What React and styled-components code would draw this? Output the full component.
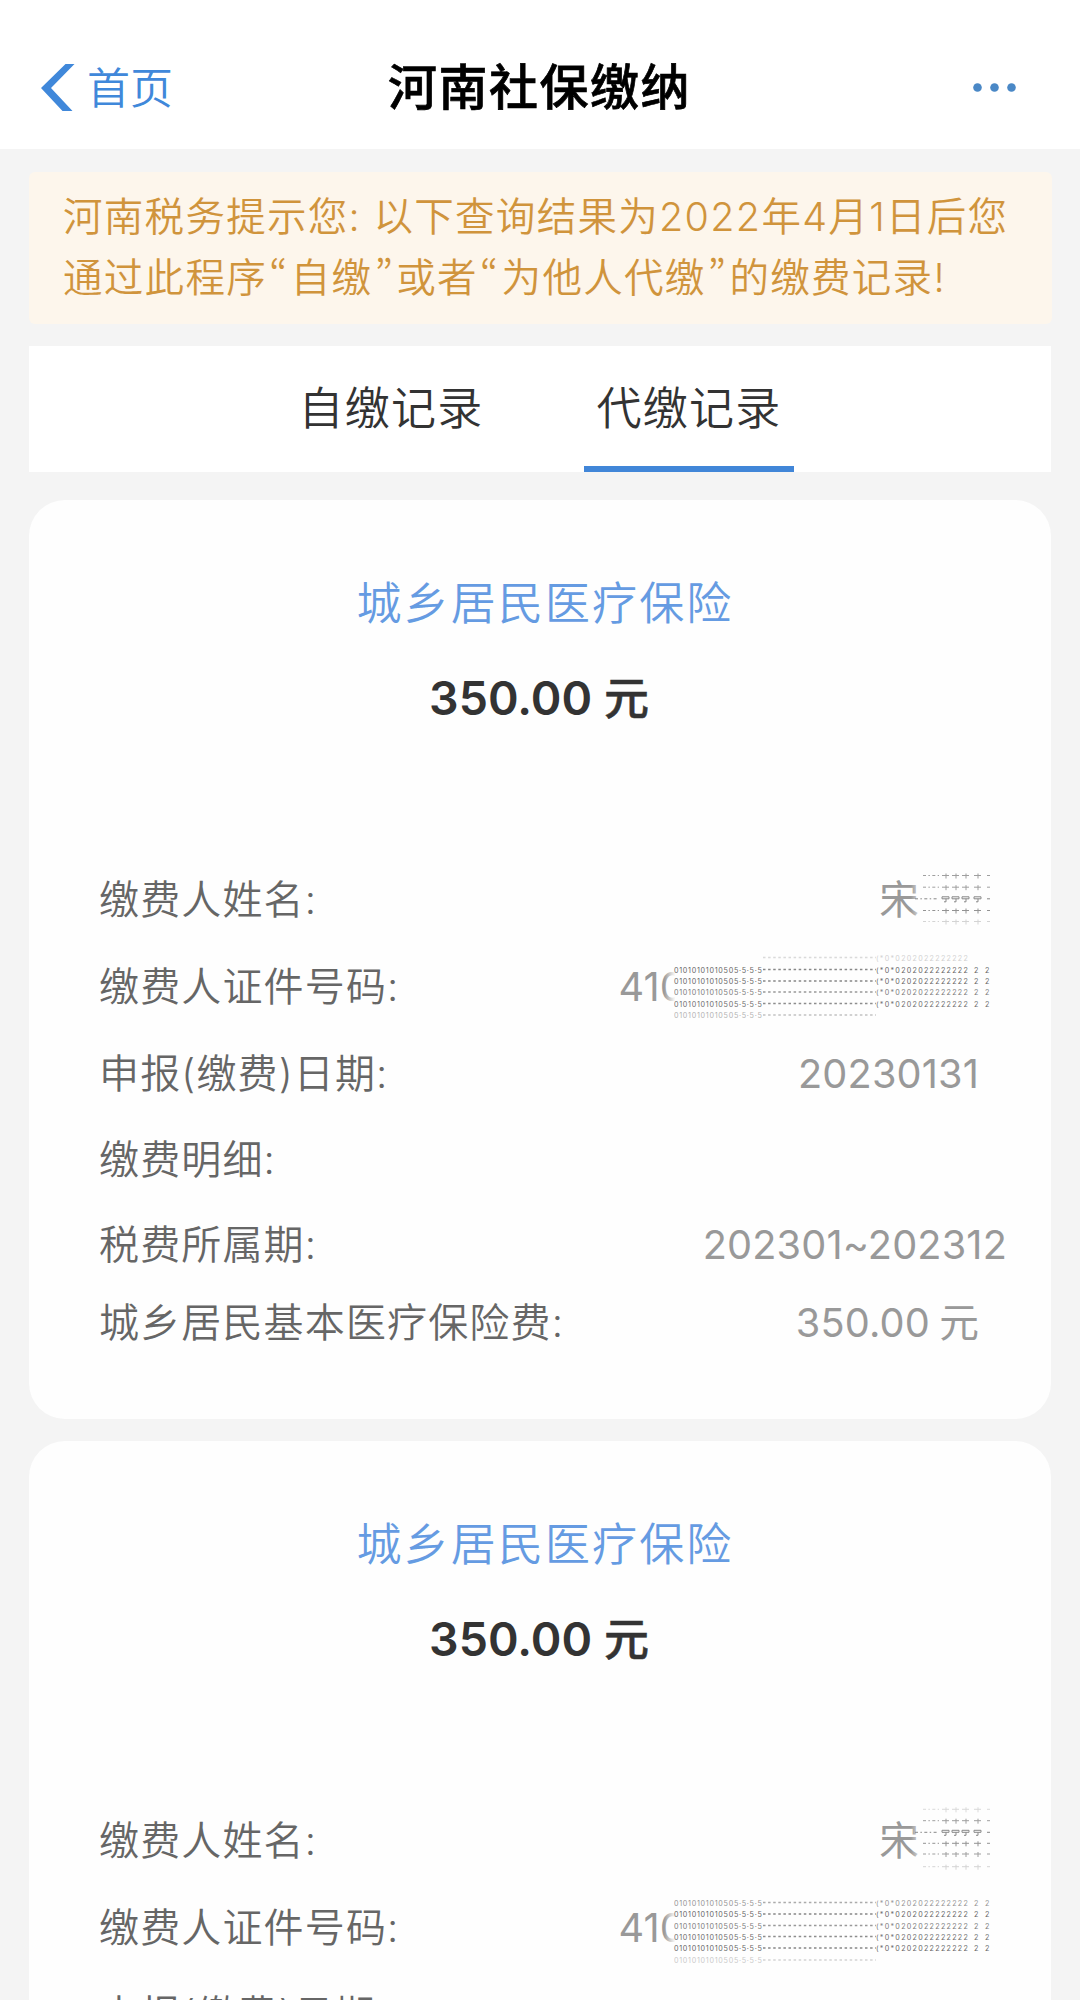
import React, { useState } from 'react'
import styled, { createGlobalStyle } from 'styled-components'

const GlobalStyle = createGlobalStyle`
  * {
    box-sizing: border-box;
  }
  body {
    margin: 0;
    background-color: #f4f4f4;
    font-family: Inter, "Noto Sans CJK SC", sans-serif;
  }
`

const Page = styled.div`
  width: 1080px;
  height: 2000px;
  overflow: hidden;
  background-color: #f4f4f4;
`

const Header = styled.header`
  display: grid;
  grid-template-columns: 1fr auto 1fr;
  align-items: center;
  height: 149px;
  padding: 26px 64px 0 41px;
  background-color: #fff;
`

const BackButton = styled.button`
  display: flex;
  align-items: center;
  gap: 12px;
  padding: 0;
  border: none;
  background-color: transparent;
  color: #4088da;
  font-family: inherit;
  font-size: 43px;
  font-weight: 350;
  line-height: 60px;
`

const Title = styled.h1`
  margin: 0;
  padding-left: 22px;
  color: #000;
  font-size: 49px;
  font-weight: 500;
  line-height: 60px;
  letter-spacing: 1.5px;
  -webkit-text-stroke: 0.7px #000;
`

const MoreIcon = styled.svg`
  justify-self: end;
`

const Notice = styled.div`
  height: 152px;
  margin: 23px 28px 0 29px;
  padding: 15px 0 0 34px;
  border-radius: 6px;
  background-color: #fdf6ec;
  color: #d0943c;
  font-size: 39.5px;
  font-weight: 350;
  line-height: 61px;
`

const NoticeLine = styled.div`
  white-space: nowrap;
  letter-spacing: 1.3px;
`

const Quote = styled.span`
  display: inline-block;
  width: 23.8px;
  font-family: "Noto Sans CJK SC", sans-serif;
  font-feature-settings: "pwid";
  line-height: 1;
  text-align: center;
`

const Tabs = styled.nav`
  display: flex;
  justify-content: center;
  gap: 88px;
  height: 126px;
  margin: 22px 29px 0 29px;
  background-color: #fff;
`

const Tab = styled.button`
  width: 210px;
  padding: 5px 0 0;
  border: none;
  border-bottom: 6px solid ${({ $active }) => ($active ? '#4186d8' : 'transparent')};
  background-color: transparent;
  color: #333;
  font-family: inherit;
  font-size: 45px;
  font-weight: 350;
  line-height: 60px;
  letter-spacing: 1.2px;
  white-space: nowrap;
`

const Card = styled.section`
  height: 919px;
  margin: 28px 29px 0;
  padding: 72px 45px 0 70px;
  border-radius: 36px;
  background-color: #fefefe;

  & + & {
    margin-top: 22px;
  }
`

const Insurance = styled.h2`
  margin: 0;
  padding-right: 15px;
  color: #659be2;
  font-size: 45px;
  font-weight: 350;
  line-height: 64px;
  letter-spacing: 2.1px;
  text-align: center;
`

const Amount = styled.div`
  margin-top: 30px;
  padding-right: 27px;
  color: #333;
  font-size: 46.5px;
  font-weight: 600;
  line-height: 64px;
  text-align: center;
`

const Unit = styled.span`
  font-size: 45px;
  font-weight: 500;
  -webkit-text-stroke: 0.5px #333;
`

const List = styled.div`
  padding-top: 124.4px;
`

const Row = styled.div`
  display: flex;
  align-items: center;
  justify-content: space-between;
  height: ${({ $height }) => $height || 86.7}px;
  padding-top: 3px;
  font-size: 40px;
  line-height: 60px;
`

const Label = styled.span`
  color: #666;
  font-weight: 350;
  letter-spacing: 1.15px;
`

const Value = styled.span`
  display: flex;
  align-items: center;
  margin-right: ${({ $wide }) => ($wide ? -1 : 27)}px;
  color: #999;
  font-size: 39.7px;
  letter-spacing: 0.15px;
  word-spacing: -2px;
`

const MaskSvg = styled.svg`
  flex: none;
  margin: 0 -12px 0 ${({ $overlap }) => -$overlap}px;
`

// Une ligne du masque posé sur le numéro de pièce
function IdMaskLine({ y, opacity, part }) {
  return (
    <g opacity={opacity} fill="#666" fontSize="7.2" fontFamily="Inter, sans-serif">
      {part !== 'right' && (
        <text x="10" y={y} textLength="88" lengthAdjust="spacing">01010101010505·5·5·5</text>
      )}
      <path d={`M99 ${y - 3}H212`} stroke="#888" strokeWidth="1.3" strokeDasharray="2.5 2.6" />
      {part !== 'left' && (
        <text x="212" y={y} textLength="92" lengthAdjust="spacing">(*0*0202022222222</text>
      )}
      {!part && (
        <>
          <text x="310" y={y}>2</text>
          <text x="321" y={y}>2</text>
        </>
      )}
    </g>
  )
}

function IdMask({ lines }) {
  return (
    <MaskSvg $overlap={21} width="327" height="80" viewBox="0 2.5 327 80">
      <defs>
        <linearGradient id="idFade">
          <stop offset="0" stopColor="#fefefe" stopOpacity="0" />
          <stop offset="0.035" stopColor="#fefefe" />
        </linearGradient>
      </defs>
      <rect width="327" height="84" fill="url(#idFade)" />
      {lines.map(([y, opacity, part]) => (
        <IdMaskLine key={y} y={y} opacity={opacity} part={part} />
      ))}
    </MaskSvg>
  )
}

function NameMask({ lines }) {
  return (
    <MaskSvg $overlap={8} width="80" height="80" viewBox="0 2.5 80 80">
      <defs>
        <linearGradient id="nameFade">
          <stop offset="0" stopColor="#fefefe" stopOpacity="0" />
          <stop offset="0.16" stopColor="#fefefe" />
        </linearGradient>
      </defs>
      <rect width="80" height="84" fill="url(#nameFade)" />
      {lines.map(([y, opacity, hooked]) => (
        <g key={y} opacity={opacity} fill="none" stroke="#888" strokeWidth="1">
          <path d={`M${hooked ? 4 : 12} ${y}H28`} strokeDasharray="3 2.4 1.5 2.4" />
          {[31, 41, 51, 63].map((x) => (
            <path
              key={x}
              d={hooked ? `M${x} ${y}v-2h7v2M${x} ${y}h7M${x + 4} ${y}v3h-2` : `M${x} ${y}h7M${x + 4} ${y - 2}v5`}
            />
          ))}
          <path d={`M76 ${y}h3`} />
        </g>
      ))}
    </MaskSvg>
  )
}

const records = [
  {
    id: 1,
    nameLines: [[18, 0.8], [29.7, 0.8], [41.3, 1, true], [53, 0.9], [64, 0.35]],
    idLines: [[16, 0.3, 'right'], [28, 1], [39.5, 1], [50.5, 0.85], [62, 0.95], [73.5, 0.5, 'left']],
  },
  {
    id: 2,
    nameLines: [[10.8, 0.3], [22.2, 0.8], [33.8, 1, true], [44.8, 0.9], [55.5, 0.8], [68.2, 0.35]],
    idLines: [[20, 0.7], [31.5, 1], [43, 0.85], [54, 0.95], [65.5, 1], [77.5, 0.35, 'left']],
  },
]

function RecordCard({ record }) {
  return (
    <Card>
      <Insurance>城乡居民医疗保险</Insurance>
      <Amount>
        350.00 <Unit>元</Unit>
      </Amount>
      <List>
        <Row>
          <Label>缴费人姓名:</Label>
          <Value>
            宋
            <NameMask lines={record.nameLines} />
          </Value>
        </Row>
        <Row>
          <Label>缴费人证件号码:</Label>
          <Value>
            410
            <IdMask lines={record.idLines} />
          </Value>
        </Row>
        <Row>
          <Label>申报(缴费)日期:</Label>
          <Value>20230131</Value>
        </Row>
        <Row>
          <Label>缴费明细:</Label>
        </Row>
        <Row $height={82.4}>
          <Label>税费所属期:</Label>
          <Value $wide>202301~202312</Value>
        </Row>
        <Row $height={74}>
          <Label>城乡居民基本医疗保险费:</Label>
          <Value>350.00 元</Value>
        </Row>
      </List>
    </Card>
  )
}

function App() {
  const [activeTab, setActiveTab] = useState('other')

  return (
    <Page>
      <GlobalStyle />
      <Header>
        <BackButton>
          <svg width="34" height="47" viewBox="0 0 34 47">
            <path d="M33.5 0H24.5L0 24L21.5 47H31.5L10 24Z" fill="#4088da" />
          </svg>
          首页
        </BackButton>
        <Title>河南社保缴纳</Title>
        <MoreIcon width="43" height="10" viewBox="0 0 43 10" fill="#4a88c6">
          <circle cx="4.5" cy="4.5" r="4.3" />
          <circle cx="21.5" cy="4.5" r="4.3" />
          <circle cx="38.5" cy="4.5" r="4.3" />
        </MoreIcon>
      </Header>
      <Notice>
        <NoticeLine>河南税务提示您: 以下查询结果为2022年4月1日后您</NoticeLine>
        <NoticeLine>
          通过此程序<Quote>“</Quote>自缴<Quote>”</Quote>或者<Quote>“</Quote>为他人代缴<Quote>”</Quote>的缴费记录!
        </NoticeLine>
      </Notice>
      <Tabs>
        <Tab $active={activeTab === 'self'} onClick={() => setActiveTab('self')}>自缴记录</Tab>
        <Tab $active={activeTab === 'other'} onClick={() => setActiveTab('other')}>代缴记录</Tab>
      </Tabs>
      {records.map((record) => (
        <RecordCard key={record.id} record={record} />
      ))}
    </Page>
  )
}

export default App
